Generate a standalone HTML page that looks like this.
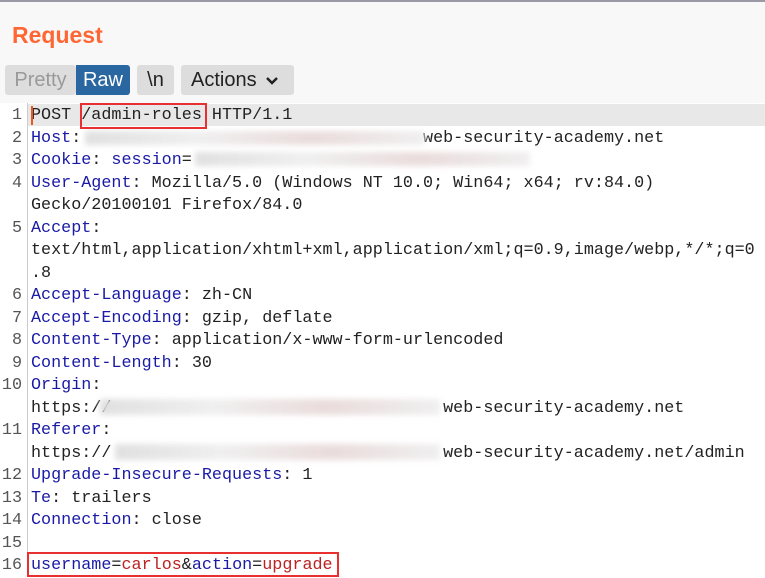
<!DOCTYPE html>
<html><head><style>
body{margin:0;width:765px;height:577px;overflow:hidden;background:#fff;font-family:"Liberation Sans",sans-serif;position:relative}
.top{position:absolute;left:0;top:0;width:765px;height:103px;background:#f8f8f8;border-top:2px solid #9a9aa6;box-sizing:border-box}
.title{position:absolute;left:12px;top:22px;font-size:23px;font-weight:bold;color:#ff6633}
.btn{position:absolute;top:65px;height:30px;line-height:30px;font-size:20px;border-radius:3px;text-align:center}
.ed{position:absolute;left:0;top:105px;width:765px;font-family:"Liberation Mono",monospace;font-size:16.75px}
.row{height:22.5px;line-height:22.5px;position:relative;white-space:pre}
.n{position:absolute;left:0;width:22px;text-align:right;color:#555}
.t{position:absolute;left:31px;color:#222}
.k{color:#1a1aa6}.v{color:#b22}
.sep{position:absolute;left:27px;top:103px;width:1px;height:474px;background:#ccc}
.blur{position:absolute;filter:blur(3px);background:linear-gradient(90deg,#ddd,#eee,#e8d8d8,#eee);opacity:.9}
.box{position:absolute;border:2px solid #e83030}
</style></head><body>
<div class="top"></div>
<div class="title">Request</div>
<div class="btn" style="left:5px;width:71px;background:#ddd;color:#999">Pretty</div>
<div class="btn" style="left:76px;width:54px;background:#2a66a0;color:#fff;border-radius:0 3px 3px 0">Raw</div>
<div class="btn" style="left:137px;width:37px;background:#ddd;color:#222">\n</div>
<div class="btn" style="left:181px;width:113px;background:#ddd;color:#222;text-align:left;padding-left:10px;box-sizing:border-box">Actions <svg width="14" height="10" viewBox="0 0 14 10" style="margin-left:3px"><path d="M2 2l5 5 5-5" stroke="#222" stroke-width="2.5" fill="none"/></svg></div>
<div style="position:absolute;left:28px;top:104px;width:737px;height:22px;background:#e8e8e8"></div>
<div class="sep"></div>
<div class="ed">
<div class="row"><span class="n">1</span><span class="t">POST /admin-roles HTTP/1.1</span></div>
<div class="row"><span class="n">2</span><span class="t"><span class="k">Host</span>:                                  web-security-academy.net</span></div>
<div class="row"><span class="n">3</span><span class="t"><span class="k">Cookie</span>: <span class="k">session</span>=</span></div>
<div class="row"><span class="n">4</span><span class="t"><span class="k">User-Agent</span>: Mozilla/5.0 (Windows NT 10.0; Win64; x64; rv:84.0)</span></div>
<div class="row"><span class="t">Gecko/20100101 Firefox/84.0</span></div>
<div class="row"><span class="n">5</span><span class="t"><span class="k">Accept</span>:</span></div>
<div class="row"><span class="t">text/html,application/xhtml+xml,application/xml;q=0.9,image/webp,*/*;q=0</span></div>
<div class="row"><span class="t">.8</span></div>
<div class="row"><span class="n">6</span><span class="t"><span class="k">Accept-Language</span>: zh-CN</span></div>
<div class="row"><span class="n">7</span><span class="t"><span class="k">Accept-Encoding</span>: gzip, deflate</span></div>
<div class="row"><span class="n">8</span><span class="t"><span class="k">Content-Type</span>: application/x-www-form-urlencoded</span></div>
<div class="row"><span class="n">9</span><span class="t"><span class="k">Content-Length</span>: 30</span></div>
<div class="row"><span class="n">10</span><span class="t"><span class="k">Origin</span>:</span></div>
<div class="row"><span class="t">https://                                 web-security-academy.net</span></div>
<div class="row"><span class="n">11</span><span class="t"><span class="k">Referer</span>:</span></div>
<div class="row"><span class="t">https://                                 web-security-academy.net/admin</span></div>
<div class="row"><span class="n">12</span><span class="t"><span class="k">Upgrade-Insecure-Requests</span>: 1</span></div>
<div class="row"><span class="n">13</span><span class="t"><span class="k">Te</span>: trailers</span></div>
<div class="row"><span class="n">14</span><span class="t"><span class="k">Connection</span>: close</span></div>
<div class="row"><span class="n">15</span><span class="t"></span></div>
<div class="row"><span class="n">16</span><span class="t"><span class="k">username</span>=<span class="v">carlos</span>&amp;<span class="k">action</span>=<span class="v">upgrade</span></span></div>
</div>
<div class="blur" style="left:85px;top:131px;width:340px;height:14px"></div>
<div class="blur" style="left:195px;top:152px;width:335px;height:14px"></div>
<div class="blur" style="left:100px;top:399px;width:340px;height:16px"></div>
<div class="blur" style="left:115px;top:444px;width:325px;height:16px"></div>
<div class="box" style="left:80px;top:103px;width:123px;height:22px"></div>
<div class="box" style="left:27px;top:552px;width:308px;height:21px"></div>
<div style="position:absolute;left:31px;top:106px;width:2px;height:19px;background:#e85a20"></div>
</body></html>
